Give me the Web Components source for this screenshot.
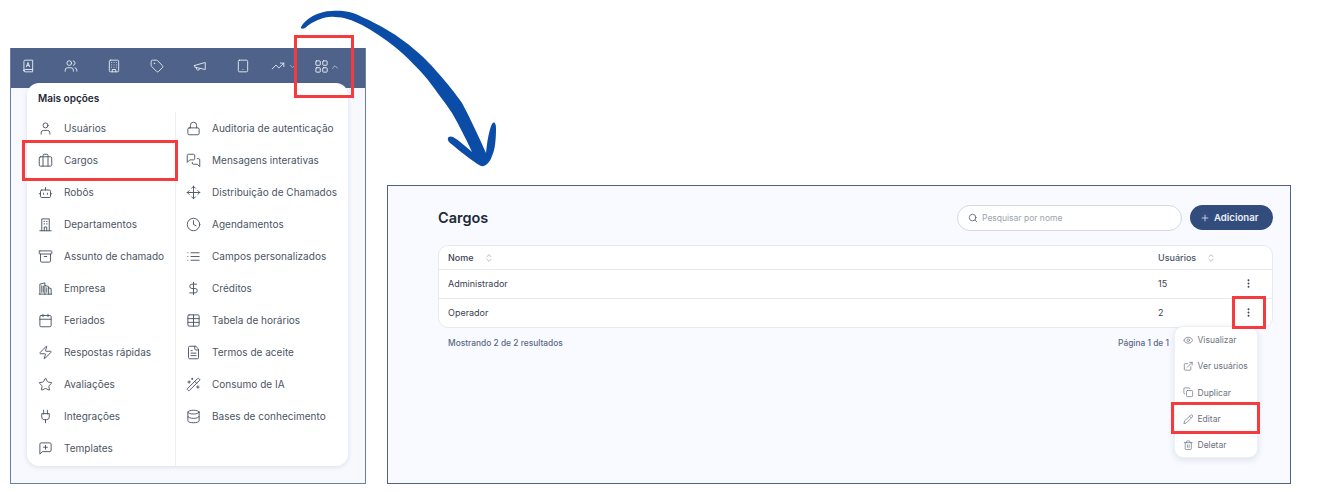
<!DOCTYPE html>
<html lang="pt-BR">
<head>
<meta charset="utf-8">
<title>Cargos</title>
<style>
  html, body { margin: 0; background: #fff; }
  body { font-family: Inter, "Liberation Sans", sans-serif; width: 1330px; height: 492px; overflow: hidden; }
</style>
</head>
<body>
<tutorial-canvas>
  <nav-panel slot="left">
    <menu-item icon="user">Usuários</menu-item>
    <menu-item icon="briefcase">Cargos</menu-item>
    <menu-item icon="bot">Robôs</menu-item>
    <menu-item icon="office">Departamentos</menu-item>
    <menu-item icon="archive">Assunto de chamado</menu-item>
    <menu-item icon="library">Empresa</menu-item>
    <menu-item icon="calendar">Feriados</menu-item>
    <menu-item icon="zap">Respostas rápidas</menu-item>
    <menu-item icon="star">Avaliações</menu-item>
    <menu-item icon="plug">Integrações</menu-item>
    <menu-item icon="template">Templates</menu-item>

    <menu-item slot="right" icon="lock">Auditoria de autenticação</menu-item>
    <menu-item slot="right" icon="messages">Mensagens interativas</menu-item>
    <menu-item slot="right" icon="move">Distribuição de Chamados</menu-item>
    <menu-item slot="right" icon="clock">Agendamentos</menu-item>
    <menu-item slot="right" icon="list">Campos personalizados</menu-item>
    <menu-item slot="right" icon="dollar">Créditos</menu-item>
    <menu-item slot="right" icon="table">Tabela de horários</menu-item>
    <menu-item slot="right" icon="file">Termos de aceite</menu-item>
    <menu-item slot="right" icon="wand">Consumo de IA</menu-item>
    <menu-item slot="right" icon="database">Bases de conhecimento</menu-item>
  </nav-panel>

  <roles-panel slot="right"></roles-panel>
</tutorial-canvas>

<script>
const ICONS = {
  book: '<path d="M5 20V4a2 2 0 0 1 2-2h13v20H7a2 2 0 0 1-2-2Zm0 0a2 2 0 0 1 2-2h13"/><path d="M9.5 13l2.5-7 2.5 7M10.5 11h3"/>',
  users: '<path d="M16 21v-2a4 4 0 0 0-4-4H6a4 4 0 0 0-4 4v2"/><circle cx="9" cy="7" r="4"/><path d="M22 21v-2a4 4 0 0 0-3-3.87"/><path d="M16 3.13a4 4 0 0 1 0 7.75"/>',
  building: '<rect x="4" y="2" width="16" height="20" rx="2"/><path d="M9 22v-4h6v4"/><path d="M8 6h.01M16 6h.01M12 6h.01M12 10h.01M12 14h.01M16 10h.01M16 14h.01M8 10h.01M8 14h.01"/>',
  tag: '<path d="M12.586 2.586A2 2 0 0 0 11.172 2H4a2 2 0 0 0-2 2v7.172a2 2 0 0 0 .586 1.414l8.704 8.704a2.426 2.426 0 0 0 3.42 0l6.58-6.58a2.426 2.426 0 0 0 0-3.42z"/><circle cx="7.5" cy="7.5" r=".5"/>',
  megaphone: '<path d="M3 11l18-5v12L3 14v-3z"/><path d="M11.6 16.8a3 3 0 1 1-5.8-1.6"/>',
  tablet: '<rect x="4" y="2" width="16" height="20" rx="2"/><path d="M12 18h.01"/>',
  trending: '<path d="M22 7l-8.5 8.5-5-5L2 17"/><path d="M16 7h6v6"/>',
  grid: '<rect x="3" y="3" width="7" height="7" rx="1"/><rect x="14" y="3" width="7" height="7" rx="1"/><rect x="14" y="14" width="7" height="7" rx="1"/><rect x="3" y="14" width="7" height="7" rx="1"/>',
  up: '<path d="M18 15l-6-6-6 6"/>',
  down: '<path d="M6 9l6 6 6-6"/>',
  user: '<path d="M19 21v-2a4 4 0 0 0-4-4H9a4 4 0 0 0-4 4v2"/><circle cx="12" cy="7" r="4"/>',
  briefcase: '<rect x="2" y="6" width="20" height="15" rx="2"/><path d="M16 21V4a2 2 0 0 0-2-2h-4a2 2 0 0 0-2 2v17"/>',
  bot: '<path d="M12 8V4"/><rect x="4" y="8" width="16" height="12" rx="2"/><path d="M2 14h2M20 14h2M15 13v2M9 13v2"/>',
  office: '<path d="M3 22h18M6 22V3h12v19"/><path d="M9.5 7h1M13.5 7h1M9.5 11h1M13.5 11h1M10 22v-6h4v6"/>',
  archive: '<rect x="2" y="3" width="20" height="5" rx="1"/><path d="M4 8v11a2 2 0 0 0 2 2h12a2 2 0 0 0 2-2V8"/><path d="M10 12h4"/>',
  library: '<path d="M3 21V5l8-2v18M11 7l6 2v12M17 11l4 1v9M2 21h20"/><path d="M6 8v10M8.5 8v10M14 11v7"/>',
  calendar: '<path d="M8 2v4M16 2v4"/><rect x="3" y="4" width="18" height="18" rx="2"/><path d="M3 10h18"/>',
  zap: '<path d="M4 14a1 1 0 0 1-.78-1.63l9.9-10.2a.5.5 0 0 1 .86.46l-1.92 6.02A1 1 0 0 0 13 10h7a1 1 0 0 1 .78 1.63l-9.9 10.2a.5.5 0 0 1-.86-.46l1.92-6.02A1 1 0 0 0 11 14z"/>',
  star: '<path d="M11.525 2.295a.53.53 0 0 1 .95 0l2.31 4.679a2.123 2.123 0 0 0 1.595 1.16l5.166.756a.53.53 0 0 1 .294.904l-3.736 3.638a2.123 2.123 0 0 0-.611 1.878l.882 5.14a.53.53 0 0 1-.771.56l-4.618-2.428a2.122 2.122 0 0 0-1.973 0L6.396 21.01a.53.53 0 0 1-.77-.56l.881-5.139a2.122 2.122 0 0 0-.611-1.879L2.16 9.795a.53.53 0 0 1 .294-.906l5.165-.755a2.122 2.122 0 0 0 1.597-1.16z"/>',
  plug: '<path d="M12 22v-5M9 8V2M15 8V2M18 8v5a4 4 0 0 1-4 4h-4a4 4 0 0 1-4-4V8Z"/>',
  template: '<path d="M21 15a2 2 0 0 1-2 2H7l-4 4V5a2 2 0 0 1 2-2h14a2 2 0 0 1 2 2z"/><path d="M12 7v6M9 10h6"/>',
  lock: '<rect x="3" y="11" width="18" height="11" rx="2"/><path d="M7 11V7a5 5 0 0 1 10 0v4"/>',
  messages: '<path d="M14 9a2 2 0 0 1-2 2H6l-4 4V4a2 2 0 0 1 2-2h8a2 2 0 0 1 2 2z"/><path d="M18 9h2a2 2 0 0 1 2 2v11l-4-4h-6a2 2 0 0 1-2-2v-1"/>',
  move: '<path d="M12 2v20M15 19l-3 3-3-3M19 9l3 3-3 3M2 12h20M5 9l-3 3 3 3M9 5l3-3 3 3"/>',
  clock: '<circle cx="12" cy="12" r="10"/><path d="M12 6v6l4 2"/>',
  list: '<path d="M3 12h.01M3 18h.01M3 6h.01M8 12h13M8 18h13M8 6h13"/>',
  dollar: '<path d="M12 2v20"/><path d="M17 5H9.5a3.5 3.5 0 0 0 0 7h5a3.5 3.5 0 0 1 0 7H6"/>',
  table: '<rect x="3" y="3" width="18" height="18" rx="2"/><path d="M12 3v18M3 9h18M3 15h18"/>',
  file: '<path d="M15 2H6a2 2 0 0 0-2 2v16a2 2 0 0 0 2 2h12a2 2 0 0 0 2-2V7Z"/><path d="M14 2v4a2 2 0 0 0 2 2h4"/><path d="M10 9H8M16 13H8M16 17H8"/>',
  wand: '<path d="M21.64 3.64l-1.28-1.28a1.21 1.21 0 0 0-1.72 0L2.36 18.64a1.21 1.21 0 0 0 0 1.72l1.28 1.28a1.2 1.2 0 0 0 1.72 0L21.64 5.36a1.2 1.2 0 0 0 0-1.72"/><path d="M14 7l3 3M5 6v4M19 14v4M10 2v2M7 8H3M21 16h-4M11 3H9"/>',
  database: '<ellipse cx="12" cy="5" rx="9" ry="3"/><path d="M3 5v14a9 3 0 0 0 18 0V5"/><path d="M3 12a9 3 0 0 0 18 0"/>',
  search: '<circle cx="11" cy="11" r="8"/><path d="M21 21l-4.3-4.3"/>',
  plus: '<path d="M5 12h14M12 5v14"/>',
  sort: '<path d="M7 15l5 5 5-5M7 9l5-5 5 5"/>',
  eye: '<path d="M2.062 12.348a1 1 0 0 1 0-.696 10.75 10.75 0 0 1 19.876 0 1 1 0 0 1 0 .696 10.75 10.75 0 0 1-19.876 0"/><circle cx="12" cy="12" r="3"/>',
  external: '<path d="M15 3h6v6M10 14L21 3M18 13v6a2 2 0 0 1-2 2H5a2 2 0 0 1-2-2V8a2 2 0 0 1 2-2h6"/>',
  copy: '<rect x="8" y="8" width="14" height="14" rx="2"/><path d="M4 16c-1.1 0-2-.9-2-2V4c0-1.1.9-2 2-2h10c1.1 0 2 .9 2 2"/>',
  pencil: '<path d="M17 3a2.85 2.83 0 1 1 4 4L7.5 20.5 2 22l1.5-5.5Z"/><path d="M15 5l4 4"/>',
  trash: '<path d="M3 6h18M19 6v14c0 1-1 2-2 2H7c-1 0-2-1-2-2V6M8 6V4c0-1 1-2 2-2h4c1 0 2 1 2 2v2M10 11v6M14 11v6"/>'
};

class AppIcon extends HTMLElement {
  connectedCallback() {
    const size = this.getAttribute('size') || 14;
    const stroke = this.getAttribute('stroke') || 1.7;
    const root = this.shadowRoot || this.attachShadow({ mode: 'open' });
    root.innerHTML = `
      <style>:host{display:inline-flex;flex:none;line-height:0;color:inherit}</style>
      <svg width="${size}" height="${size}" viewBox="0 0 24 24" fill="none" stroke="currentColor"
        stroke-width="${stroke}" stroke-linecap="round" stroke-linejoin="round">${ICONS[this.getAttribute('name')] || ''}</svg>`;
  }
}
customElements.define('app-icon', AppIcon);

class MenuItem extends HTMLElement {
  constructor() {
    super();
    this.attachShadow({ mode: 'open' });
    // the right column sits 1px closer to its divider
    const left = this.getAttribute('slot') === 'right' ? 10 : 11;
    this.shadowRoot.innerHTML = `
      <style>
        :host{display:flex;align-items:center;height:32px;padding-left:${left}px;gap:11px;
          font-size:10px;font-weight:400;letter-spacing:.02px;color:#4b5563;white-space:nowrap}
        app-icon{color:#4b5563}
      </style>
      <app-icon name="${this.getAttribute('icon')}" size="15" stroke="1.5"></app-icon>
      <slot></slot>`;
  }
}
customElements.define('menu-item', MenuItem);

class NavPanel extends HTMLElement {
  constructor() {
    super();
    this.attachShadow({ mode: 'open' });
    const icons = ['book', 'users', 'building', 'tag', 'megaphone', 'tablet'];
    this.shadowRoot.innerHTML = `
      <style>
        :host{display:block;box-sizing:border-box;width:356px;height:436px;background:#f7f9fe;
          border:1px solid #6b7fa6;border-top:0}
        .bar{display:flex;align-items:flex-start;height:40px;box-sizing:border-box;background:#4e628a;
          padding:11px 0 0 10px;gap:29px;color:#eef1f7}
        .group{display:flex;align-items:center;gap:3px;margin:0 -11px 0 -8px}
        .group app-icon:last-child{color:#c3cce0}
        .group.last{margin:0 0 0 -1px;gap:1px}
        .card{box-sizing:border-box;margin:-5px 0 0 16px;width:321px;height:383px;background:#fff;
          border-radius:12px;box-shadow:0 1px 5px rgba(60,80,130,.16);position:relative}
        h2{margin:0;height:29px;box-sizing:border-box;padding:9px 0 0 11px;font-size:10px;line-height:13px;
          font-weight:600;color:#1f2937}
        .cols{display:grid;grid-template-columns:148px 173px;height:354px}
        .col + .col{border-left:1px solid #eef0f4}
      </style>
      <div class="bar">
        ${icons.map(n => `<app-icon name="${n}" size="14" stroke="1.5"></app-icon>`).join('')}
        <span class="group"><app-icon name="trending" size="14" stroke="1.5"></app-icon><app-icon name="down" size="9" stroke="1.8"></app-icon></span>
        <span class="group last"><app-icon name="grid" size="15" stroke="1.5"></app-icon><app-icon name="up" size="10" stroke="1.8"></app-icon></span>
      </div>
      <section class="card">
        <h2>Mais opções</h2>
        <div class="cols">
          <div class="col"><slot></slot></div>
          <div class="col"><slot name="right"></slot></div>
        </div>
      </section>`;
  }
}
customElements.define('nav-panel', NavPanel);

class ActionMenu extends HTMLElement {
  constructor() {
    super();
    this.attachShadow({ mode: 'open' });
    const items = [['eye', 'Visualizar'], ['external', 'Ver usuários'], ['copy', 'Duplicar'], ['pencil', 'Editar'], ['trash', 'Deletar']];
    this.shadowRoot.innerHTML = `
      <style>
        :host{display:block;position:absolute;width:84px;height:132px;box-sizing:border-box;
          background:#fff;border:1px solid #eceff4;border-radius:9px;
          box-shadow:0 2px 6px rgba(60,80,130,.14);z-index:2}
        div{display:flex;align-items:center;gap:4px;height:26.3px;padding-left:8px;
          font-size:8.5px;color:#6b7280;white-space:nowrap}
        div:first-child{margin-top:-2px}
      </style>
      ${items.map(([i, t]) => `<div><app-icon name="${i}" size="10.5" stroke="1.6"></app-icon>${t}</div>`).join('')}`;
  }
}
customElements.define('action-menu', ActionMenu);

class RolesTable extends HTMLElement {
  constructor() {
    super();
    this.attachShadow({ mode: 'open' });
    const row = (name, n) => `
      <div class="row"><span class="name">${name}</span><span class="num">${n}</span>
      <span class="more"><svg width="3" height="9" viewBox="0 0 3 9"><circle cx="1.5" cy="1.3" r=".95" fill="#374151"/><circle cx="1.5" cy="4.5" r=".95" fill="#374151"/><circle cx="1.5" cy="7.7" r=".95" fill="#374151"/></svg></span></div>`;
    this.shadowRoot.innerHTML = `
      <style>
        :host{display:block;box-sizing:border-box;background:#fff;border:1px solid #e7eaf0;border-radius:10px;
          font-size:9px;color:#374151}
        .row{display:flex;align-items:center;height:29px;padding:0 14px 1px 9px;border-top:1px solid #e7eaf0;box-sizing:border-box}
        .head{height:23px;border-top:0;font-weight:500;font-size:9px;color:#374151;padding-bottom:0}
        .name{flex:1;display:flex;align-items:center;gap:10px}
        .num{width:80px;display:flex;align-items:center;gap:10px}
        .head .num{color:#4b5563}
        .more{width:20px;flex:none;display:flex;justify-content:center}
        app-icon{color:#8b95a5}
      </style>
      <div class="row head">
        <span class="name">Nome <app-icon name="sort" size="10" stroke="1.5"></app-icon></span>
        <span class="num">Usuários <app-icon name="sort" size="10" stroke="1.5"></app-icon></span>
        <span class="more"></span>
      </div>
      ${row('Administrador', '15')}
      ${row('Operador', '2')}`;
  }
}
customElements.define('roles-table', RolesTable);

class RolesPanel extends HTMLElement {
  constructor() {
    super();
    this.attachShadow({ mode: 'open' });
    this.shadowRoot.innerHTML = `
      <style>
        :host{display:block;box-sizing:border-box;width:904px;height:299px;background:#f8faff;
          border:1px solid #4f6187;padding:19px 17px 0 50px;position:relative}
        header{display:flex;align-items:center;height:26px;margin-bottom:14px}
        h1{flex:1;margin:-2px 0 0;font-size:14.5px;font-weight:600;color:#1f2937}
        .search{display:flex;align-items:center;gap:4px;box-sizing:border-box;width:225px;height:26px;
          padding-left:10px;background:#fff;border:1px solid #d5d9e2;border-radius:13px;
          font-size:8.5px;color:#9ca3af;margin-right:8px}
        .search app-icon{color:#4b5563}
        .add{display:flex;align-items:center;gap:4px;box-sizing:border-box;width:83px;height:25px;margin-bottom:1px;
          padding-left:10px;background:#324c7e;border-radius:13px;font-size:9.6px;font-weight:600;color:#eef1f7}
        footer{display:flex;justify-content:space-between;padding:10px 104px 0 10px;font-size:8.4px;
          line-height:11px;font-weight:500;color:#5a6a85}
        action-menu{top:140px;right:32px}
      </style>
      <header>
        <h1>Cargos</h1>
        <div class="search"><app-icon name="search" size="10" stroke="1.8"></app-icon>Pesquisar por nome</div>
        <div class="add"><app-icon name="plus" size="10" stroke="1.8"></app-icon>Adicionar</div>
      </header>
      <roles-table></roles-table>
      <footer><span>Mostrando 2 de 2 resultados</span><span>Página 1 de 1</span></footer>
      <action-menu></action-menu>`;
  }
}
customElements.define('roles-panel', RolesPanel);

class RedMark extends HTMLElement {
  constructor() {
    super();
    this.attachShadow({ mode: 'open' });
    this.shadowRoot.innerHTML = `<style>:host{display:block;position:absolute;box-sizing:border-box;border:3px solid #f63b3f;z-index:5}</style>`;
  }
}
customElements.define('red-mark', RedMark);

class TutorialCanvas extends HTMLElement {
  constructor() {
    super();
    this.attachShadow({ mode: 'open' });
    this.shadowRoot.innerHTML = `
      <style>
        :host{display:flex;align-items:flex-end;position:relative;box-sizing:border-box;width:1330px;height:492px;
          padding:0 0 8px 10px;gap:21px}
        svg{position:absolute;left:0;top:0;z-index:4}
      </style>
      <slot name="left"></slot>
      <slot name="right"></slot>
      <svg width="520" height="180" viewBox="0 0 520 180">
        <path fill="#0a4ca6" d="M301 27C305 19 318 11 332 11C345 10 355 13 362 17C380 25 398 35 415 50C425 58 432 66 438 73C448 84 455 93 462 103C470 118 478 135 486 153C487 142 489 130 492 124C494 121 496 123 496 128C496 140 495 150 492 156C490 162 486 167 481 166C473 162 460 151 450 143C446 139 448 135 453 137C460 141 466 147 472 152C466 139 459 125 452 113C444 101 436 91 428 80C418 68 408 58 395 47C385 39 373 31 362 25C352 20 344 17 335 17C325 16 315 20 305 28C303 29 300 29 301 27Z"/>
      </svg>
      <red-mark style="left:294px;top:35px;width:60px;height:63px"></red-mark>
      <red-mark style="left:22px;top:140px;width:156px;height:41px"></red-mark>
      <red-mark style="left:1232px;top:296px;width:34px;height:33px"></red-mark>
      <red-mark style="left:1171px;top:402px;width:89px;height:32px"></red-mark>`;
  }
}
customElements.define('tutorial-canvas', TutorialCanvas);
</script>
</body>
</html>
